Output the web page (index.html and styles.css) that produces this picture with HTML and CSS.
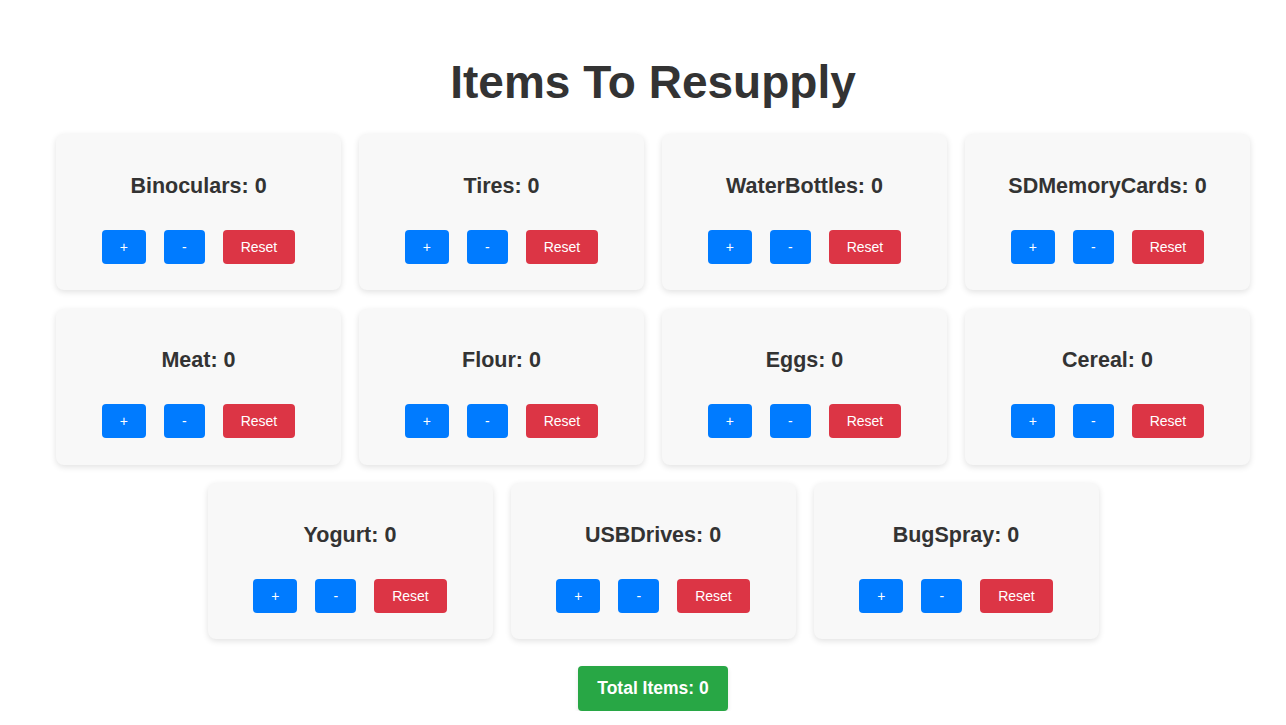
FILE: index.html
```html
<!DOCTYPE html>
<html>
<head>
<meta charset="utf-8">
<link rel="stylesheet" href="styles.css">
</head>
<body>
<div class="page">
  <h1 class="title">Items To Resupply</h1>
  <div class="grid">
    <div class="card"><h3 class="label">Binoculars: 0</h3><div class="btns"><button class="btn blue">+</button><button class="btn blue">-</button><button class="btn red">Reset</button></div></div>
    <div class="card"><h3 class="label">Tires: 0</h3><div class="btns"><button class="btn blue">+</button><button class="btn blue">-</button><button class="btn red">Reset</button></div></div>
    <div class="card"><h3 class="label">WaterBottles: 0</h3><div class="btns"><button class="btn blue">+</button><button class="btn blue">-</button><button class="btn red">Reset</button></div></div>
    <div class="card"><h3 class="label">SDMemoryCards: 0</h3><div class="btns"><button class="btn blue">+</button><button class="btn blue">-</button><button class="btn red">Reset</button></div></div>
    <div class="card"><h3 class="label">Meat: 0</h3><div class="btns"><button class="btn blue">+</button><button class="btn blue">-</button><button class="btn red">Reset</button></div></div>
    <div class="card"><h3 class="label">Flour: 0</h3><div class="btns"><button class="btn blue">+</button><button class="btn blue">-</button><button class="btn red">Reset</button></div></div>
    <div class="card"><h3 class="label">Eggs: 0</h3><div class="btns"><button class="btn blue">+</button><button class="btn blue">-</button><button class="btn red">Reset</button></div></div>
    <div class="card"><h3 class="label">Cereal: 0</h3><div class="btns"><button class="btn blue">+</button><button class="btn blue">-</button><button class="btn red">Reset</button></div></div>
    <div class="card"><h3 class="label">Yogurt: 0</h3><div class="btns"><button class="btn blue">+</button><button class="btn blue">-</button><button class="btn red">Reset</button></div></div>
    <div class="card"><h3 class="label">USBDrives: 0</h3><div class="btns"><button class="btn blue">+</button><button class="btn blue">-</button><button class="btn red">Reset</button></div></div>
    <div class="card"><h3 class="label">BugSpray: 0</h3><div class="btns"><button class="btn blue">+</button><button class="btn blue">-</button><button class="btn red">Reset</button></div></div>
  </div>
  <div class="total-row"><div class="total">Total Items: 0</div></div>
</div>
</body>
</html>
```
FILE: styles.css
```css
html, body {
  margin: 0;
  padding: 0;
  background: #ffffff;
  font-family: "Liberation Sans", Arial, sans-serif;
  color: #333333;
}
.page {
  padding: 55px 0 0 20px;
}
.title {
  margin: 1px 0 0;
  text-align: center;
  font-size: 46px;
  line-height: 52px;
  font-weight: bold;
  color: #333333;
}
.grid {
  display: flex;
  flex-wrap: wrap;
  justify-content: center;
  gap: 18.5px 18px;
  margin-top: 26px;
  padding: 0 36px;
}
.card {
  width: 285px;
  height: 156px;
  box-sizing: border-box;
  background: #f8f8f8;
  border-radius: 8px;
  box-shadow: 0 2px 6px rgba(0, 0, 0, 0.12);
  padding-top: 39.5px;
  text-align: center;
}
.label {
  margin: 0;
  font-size: 21.5px;
  line-height: 24px;
  font-weight: bold;
  color: #333333;
}
.btns {
  display: flex;
  justify-content: center;
  gap: 18px;
  margin-top: 32px;
}
.btn {
  border: none;
  border-radius: 4px;
  color: #ffffff;
  font-family: "Liberation Sans", Arial, sans-serif;
  font-size: 14px;
  line-height: 16px;
  padding: 9px 18px;
  height: 34px;
}
.blue { background: #007bff; }
.red { background: #dc3545; }
.total-row {
  display: flex;
  justify-content: center;
  margin-top: 27px;
}
.total {
  background: #28a745;
  color: #ffffff;
  font-weight: bold;
  font-size: 17.5px;
  line-height: 45px;
  height: 45px;
  padding: 0 19px;
  border-radius: 4px;
  box-shadow: 0 2px 4px rgba(0, 0, 0, 0.1);
}
```
